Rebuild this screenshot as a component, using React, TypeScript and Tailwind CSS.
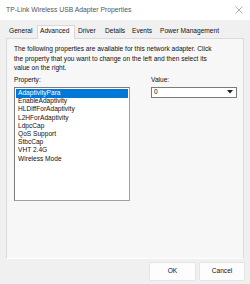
import React from "react";

const tabs = [
  { label: "General", w: "w-[31px]" },
  { label: "Advanced", w: "w-[38px]", active: true },
  { label: "Driver", w: "w-[27px]" },
  { label: "Details", w: "w-[27px]" },
  { label: "Events", w: "w-[28px]" },
  { label: "Power Management", w: "w-[68px]" },
];

const properties = [
  "AdaptivityPara",
  "EnableAdaptivity",
  "HLDiffForAdaptivity",
  "L2HForAdaptivity",
  "LdpcCap",
  "QoS Support",
  "StbcCap",
  "VHT 2.4G",
  "Wireless Mode",
];

const App = () => {
  return (
    <div
      className="relative flex h-[284px] w-[250px] flex-col overflow-hidden bg-[#f0f0f0] text-[6.6px] leading-none whitespace-nowrap text-[#111]"
      style={{ fontFamily: '"Liberation Sans", Arial, sans-serif' }}
    >
      {/* title bar */}
      <div className="flex h-[20px] items-center justify-between bg-white pl-[6px] pr-[7px]">
        <span className="text-[6.8px] text-[#555]">TP-Link Wireless USB Adapter Properties</span>
        <svg width="8" height="8" viewBox="0 0 8 8" className="text-[#9a9a9a]">
          <path d="M0.5 0.5L7.5 7.5M7.5 0.5L0.5 7.5" stroke="currentColor" strokeWidth="0.8" />
        </svg>
      </div>

      {/* tabs */}
      <div className="flex h-[18px] items-end pl-[6px]">
        {tabs.map((tab) =>
          tab.active ? (
            <div
              key={tab.label}
              className={`${tab.w} relative z-10 -mb-px flex h-[14px] items-start border border-b-0 border-[#d9d9d9] bg-[#f9f9f9] pl-[2px] pt-[2px]`}
            >
              {tab.label}
            </div>
          ) : (
            <div key={tab.label} className={`${tab.w} flex h-[10px] items-start pl-[3px]`}>
              {tab.label}
            </div>
          )
        )}
      </div>

      {/* tab page */}
      <div className="mx-[6px] flex h-[221px] flex-col border border-[#dadada] border-b-white bg-[#f7f7f7] pl-[7px] pt-[5px]">
        <p className="leading-[9.5px]">
          The following properties are available for this network adapter. Click
          <br />
          the property that you want to change on the left and then select its
          <br />
          value on the right.
        </p>

        <div className="mt-[4px] flex">
          <div className="flex w-[137px] flex-col">
            <span className="mb-[2px] h-[8px]">Property:</span>
            <div className="h-[114px] w-[116px] border border-[#a0a0a0] border-l-[#7a7a7a] border-t-[#7a7a7a] bg-white p-px">
              {properties.map((p, i) => (
                <div
                  key={p}
                  className={`flex items-center pl-[2px] ${i === 0 ? "h-[9px] bg-[#0078d7] text-white" : "h-[8.2px]"}`}
                >
                  {p}
                </div>
              ))}
            </div>
          </div>

          <div className="flex flex-col">
            <span className="mb-[2px] h-[8px]">Value:</span>
            <div className="flex h-[11px] w-[86px] items-center justify-between border border-[#7a7a7a] bg-white pl-[2px] pr-[3px]">
              <span>0</span>
              <svg width="6" height="4" viewBox="0 0 6 4">
                <path d="M0 0H6L3 3.5Z" fill="#222" />
              </svg>
            </div>
          </div>
        </div>
      </div>

      {/* buttons */}
      <div className="flex justify-end gap-[3px] pr-[5px] pt-[3px]">
        <button className="flex h-[19px] w-[47px] items-center justify-center rounded-[2px] border border-[#e5e5e5] bg-[#fdfdfd] text-[6.6px]">
          OK
        </button>
        <button className="flex h-[19px] w-[46px] items-center justify-center rounded-[2px] border border-[#e5e5e5] bg-[#fdfdfd] text-[6.6px]">
          Cancel
        </button>
      </div>
    </div>
  );
};

export default App;
